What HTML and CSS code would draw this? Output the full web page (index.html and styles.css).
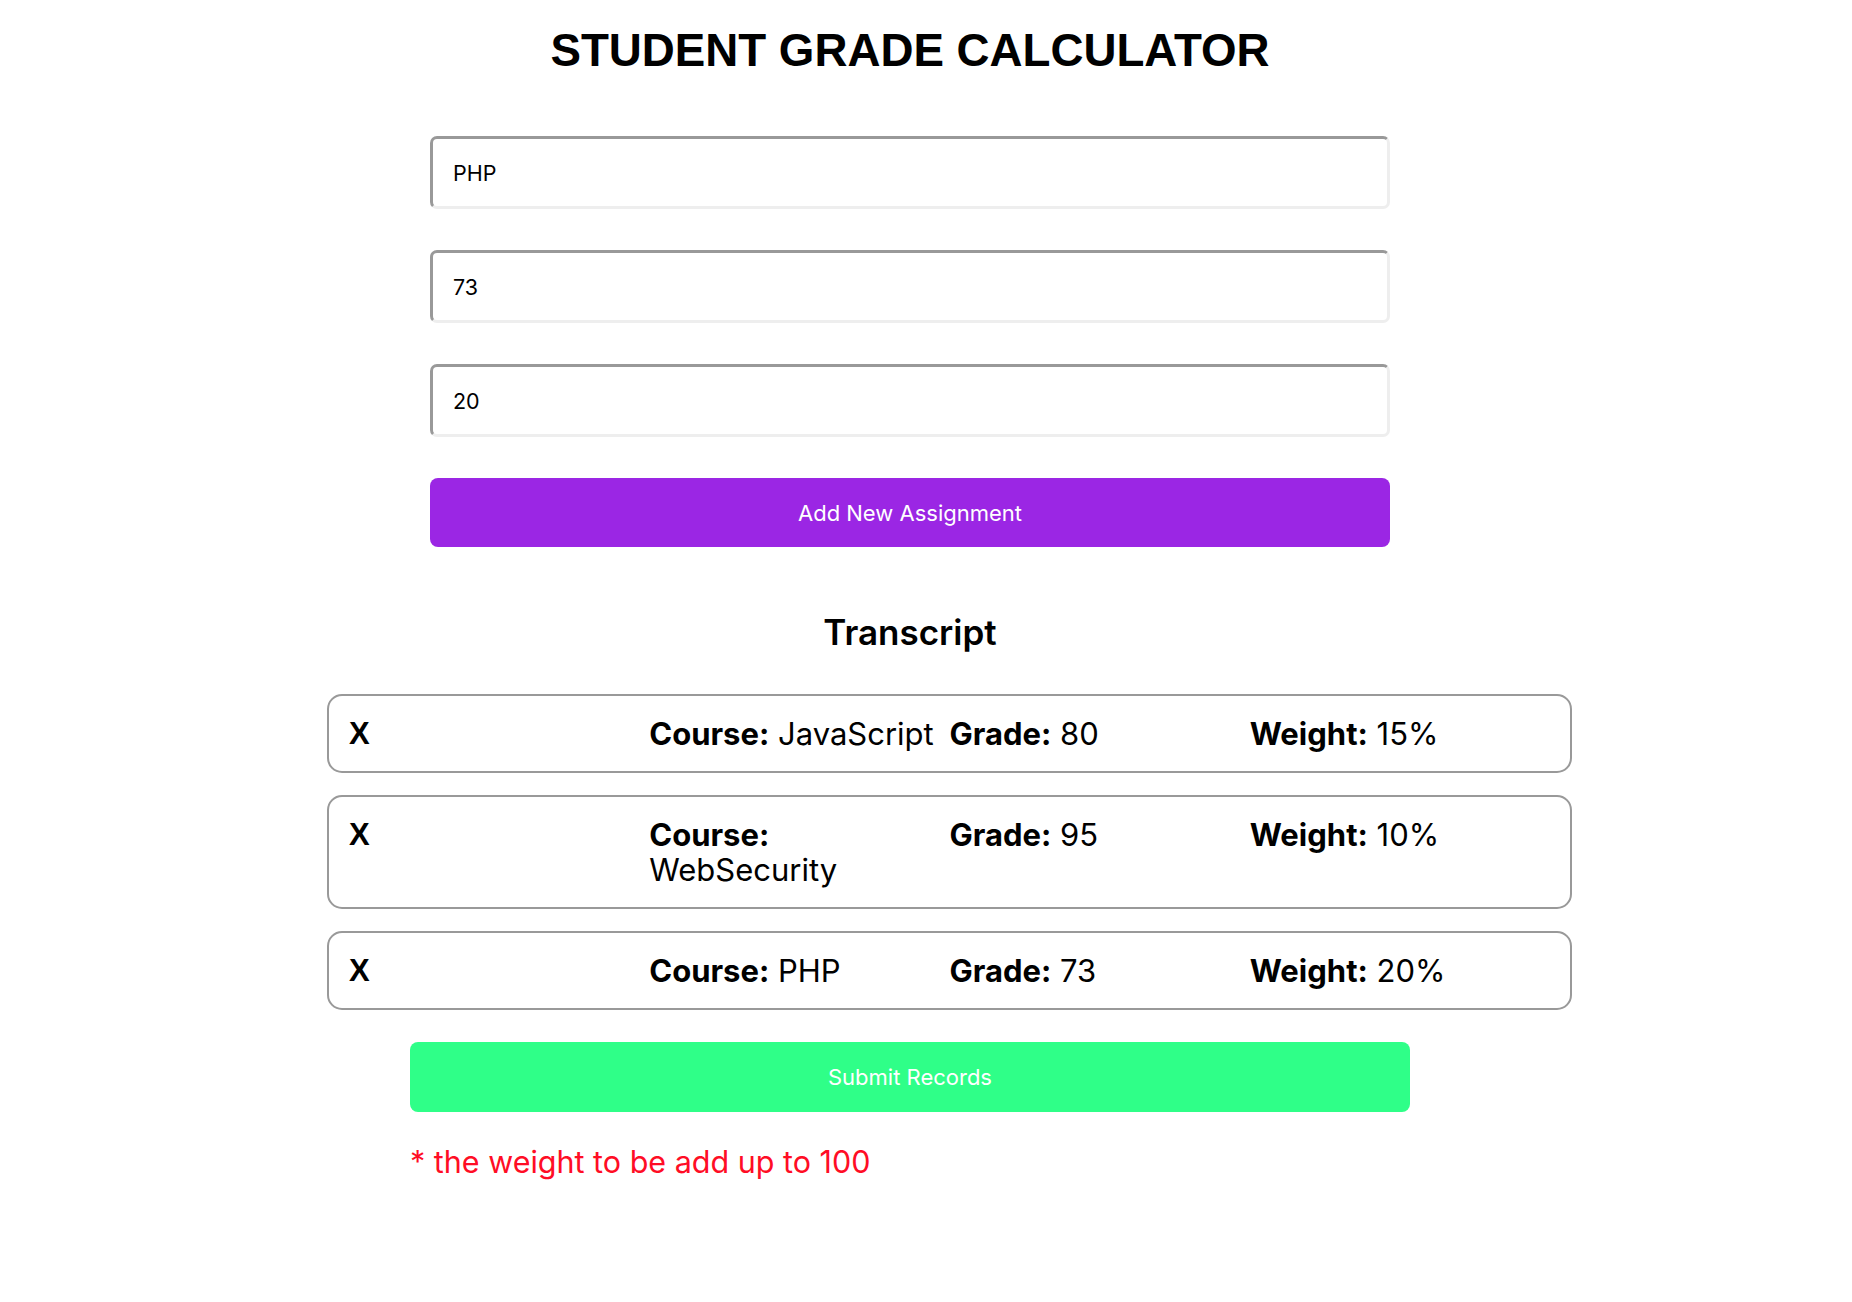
FILE: index.html
```html
<!DOCTYPE html>
<html lang="en">
<head>
<meta charset="utf-8">
<title>Student Grade Calculator</title>
<link rel="stylesheet" href="styles.css">
</head>
<body>
<div class="page">
  <h1 class="title">STUDENT GRADE CALCULATOR</h1>
  <form class="form">
    <input class="field" type="text" value="PHP">
    <input class="field" type="text" value="73">
    <input class="field" type="text" value="20">
    <button class="btn btn-add" type="button">Add New Assignment</button>
  </form>
  <h2 class="section-title">Transcript</h2>
  <div class="records">
    <div class="record">
      <div class="cell remove">X</div>
      <div class="cell"><b>Course:</b> JavaScript</div>
      <div class="cell"><b>Grade:</b> 80</div>
      <div class="cell"><b>Weight:</b> 15%</div>
    </div>
    <div class="record">
      <div class="cell remove">X</div>
      <div class="cell"><b>Course:</b> WebSecurity</div>
      <div class="cell"><b>Grade:</b> 95</div>
      <div class="cell"><b>Weight:</b> 10%</div>
    </div>
    <div class="record">
      <div class="cell remove">X</div>
      <div class="cell"><b>Course:</b> PHP</div>
      <div class="cell"><b>Grade:</b> 73</div>
      <div class="cell"><b>Weight:</b> 20%</div>
    </div>
  </div>
  <button class="btn btn-submit" type="button">Submit Records</button>
  <p class="note">* the weight to be add up to 100</p>
</div>
</body>
</html>
```
FILE: styles.css
```css
* { box-sizing: border-box; }
html, body { margin: 0; padding: 0; background: #fff; }
body { font-family: Inter, "Noto Sans", sans-serif; color: #000; }

.page {
  width: 1820px;
  display: flex;
  flex-direction: column;
  align-items: center;
}

.title {
  margin: 23px 0 0;
  font-family: "Liberation Sans", Arial, sans-serif;
  font-weight: 700;
  font-size: 45.7px;
  line-height: 56px;
}

.form {
  width: 960px;
  margin-top: 57px;
  display: flex;
  flex-direction: column;
  gap: 41px;
}

.field {
  height: 73px;
  width: 100%;
  padding: 0 20px;
  border: 3px solid;
  border-color: #999 #eee #eee #999;
  border-radius: 7px;
  font-family: Inter, sans-serif;
  font-size: 21.5px;
  color: #000;
  background: #fff;
  outline: none;
}

.btn {
  border: none;
  border-radius: 8px;
  color: #fff;
  font-family: Inter, sans-serif;
  font-size: 22px;
  cursor: pointer;
}

.btn-add {
  height: 69px;
  background: #9b26e4;
}

.section-title {
  margin: 63px 0 0;
  font-family: Inter, sans-serif;
  font-weight: 600;
  font-size: 35px;
  line-height: 44px;
}

.records {
  align-self: flex-start;
  margin-left: 327px;
  width: 1245px;
  margin-top: 40px;
  display: flex;
  flex-direction: column;
  gap: 22px;
}

.record {
  display: grid;
  grid-template-columns: repeat(4, 1fr);
  padding: 20px;
  border: 2px solid #999;
  border-radius: 15px;
  font-size: 31px;
  line-height: 35px;
}

.record b { font-weight: 700; }
.remove { font-weight: 700; font-family: "Liberation Sans", Arial, sans-serif; }

.btn-submit {
  width: 1000px;
  height: 70px;
  margin-top: 32px;
  background: #2fff88;
}

.note {
  align-self: flex-start;
  margin: 32px 0 0 410px;
  color: #ff0d25;
  font-size: 30.5px;
  line-height: 36px;
}
```
